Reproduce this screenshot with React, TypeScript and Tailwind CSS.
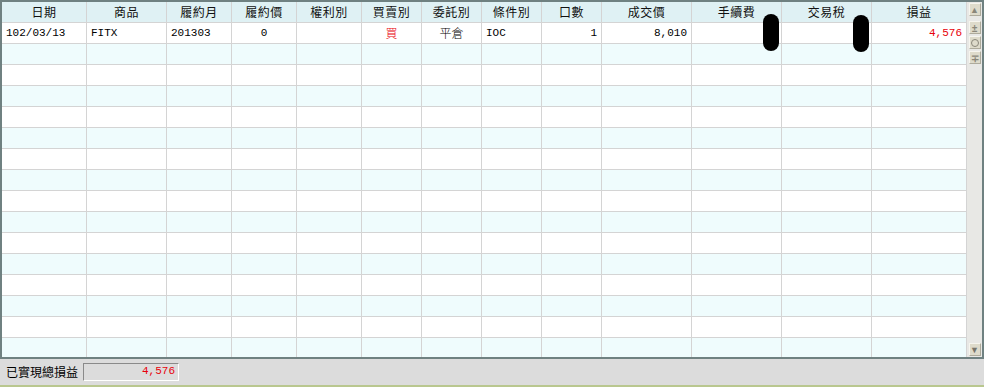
import React from 'react';

const cols = [85, 80, 65, 65, 65, 60, 60, 60, 60, 90, 90, 90, 95];
const headers = ['日期', '商品', '履約月', '履約價', '權利別', '買賣別', '委託別', '條件別', '口數', '成交價', '手續費', '交易稅', '損益'];

const mono = { fontFamily: '"Liberation Mono", "Noto Sans CJK TC", monospace' };
const cjk = { fontFamily: '"Noto Sans CJK TC", "Liberation Sans", sans-serif' };

interface Cell {
    text: string;
    align: 'left' | 'center' | 'right';
    red?: boolean;
    cjk?: boolean;
}

const firstRow: Cell[] = [
    { text: '102/03/13', align: 'left' },
    { text: 'FITX', align: 'left' },
    { text: '201303', align: 'left' },
    { text: '0', align: 'center' },
    { text: '', align: 'left' },
    { text: '買', align: 'center', red: true, cjk: true },
    { text: '平倉', align: 'center', cjk: true },
    { text: 'IOC', align: 'left' },
    { text: '1', align: 'right' },
    { text: '8,010', align: 'right' },
    { text: '', align: 'right' },
    { text: '', align: 'right' },
    { text: '4,576', align: 'right', red: true },
];

const gridCols = 'grid grid-cols-[85px_80px_65px_65px_65px_60px_60px_60px_60px_90px_90px_90px_95px]';

function ScrollButton({ children }: { children: React.ReactNode }) {
    return (
        <div className="flex h-[13px] w-[12px] items-center justify-center border border-[#f6f5ee] border-r-[#aeab9c] border-b-[#aeab9c] bg-[#dedbcb] text-[9px] leading-none text-[#8a877a]">
            {children}
        </div>
    );
}

export default function App() {
    const emptyRows = Array.from({ length: 15 });

    return (
        <div className="relative flex h-[387px] w-[984px] flex-col bg-[#dcdcdc]">
            <div className="flex h-[359px] w-[984px] border-2 border-[#6f8181]">
                <div className="h-full w-[965px] overflow-hidden bg-white">
                    <div className={`${gridCols} h-[21px] border-b border-[#d4d4d4] bg-[#dff1f4]`}>
                        {headers.map((h) => (
                            <div
                                key={h}
                                className="flex items-center justify-center border-r border-[#d4d4d4] text-[12px] tracking-[0.5px] text-[#111]"
                                style={cjk}
                            >
                                {h}
                            </div>
                        ))}
                    </div>
                    <div className={`${gridCols} h-[21px] border-b border-[#d4d4d4] bg-white`}>
                        {firstRow.map((c, i) => (
                            <div
                                key={i}
                                className={`flex items-center border-r border-[#d4d4d4] px-[4px] ${
                                    c.align === 'left' ? 'justify-start' : c.align === 'center' ? 'justify-center' : 'justify-end'
                                } ${c.red ? 'text-[#e8000b]' : 'text-black'} ${c.cjk ? 'text-[12px] font-light' : 'text-[11px]'}`}
                                style={c.cjk ? cjk : mono}
                            >
                                {c.text}
                            </div>
                        ))}
                    </div>
                    {emptyRows.map((_, r) => (
                        <div
                            key={r}
                            className={`${gridCols} h-[21px] border-b border-[#d4d4d4] ${r % 2 === 0 ? 'bg-[#effcfd]' : 'bg-white'}`}
                        >
                            {cols.map((_, i) => (
                                <div key={i} className="border-r border-[#d4d4d4]" />
                            ))}
                        </div>
                    ))}
                </div>
                <div className="flex h-full w-[15px] flex-col items-center bg-[#e8e8e5] pt-[1px] pb-[1px]">
                    <ScrollButton>▲</ScrollButton>
                    <div className="h-[5px]" />
                    <ScrollButton>
                        <span className="text-[10px] font-bold">±</span>
                    </ScrollButton>
                    <div className="h-[2px]" />
                    <ScrollButton>
                        <span className="block h-[8px] w-[8px] rounded-full border border-[#8a877a]" />
                    </ScrollButton>
                    <div className="h-[2px]" />
                    <ScrollButton>
                        <span className="text-[10px] font-bold">∓</span>
                    </ScrollButton>
                    <div className="flex-1" />
                    <ScrollButton>
                        <span className="text-[#77756b]">▼</span>
                    </ScrollButton>
                </div>
            </div>
            <div className="flex h-[25px] items-center pl-[6px]">
                <span className="w-[77px] text-[12px] text-black" style={cjk}>
                    已實現總損益
                </span>
                <div
                    className="flex h-[18px] w-[96px] items-center justify-end border border-[#8a8a8a] border-r-white border-b-white pr-[3px] text-[11px] text-[#e8000b]"
                    style={mono}
                >
                    4,576
                </div>
            </div>
            <div className="mt-auto h-[2px] w-full bg-[#b9c78f]" />
            <div className="absolute left-[763px] top-[14px] h-[37px] w-[16px] rounded-full bg-black" />
            <div className="absolute left-[853px] top-[15px] h-[37px] w-[16px] rounded-full bg-black" />
        </div>
    );
}
